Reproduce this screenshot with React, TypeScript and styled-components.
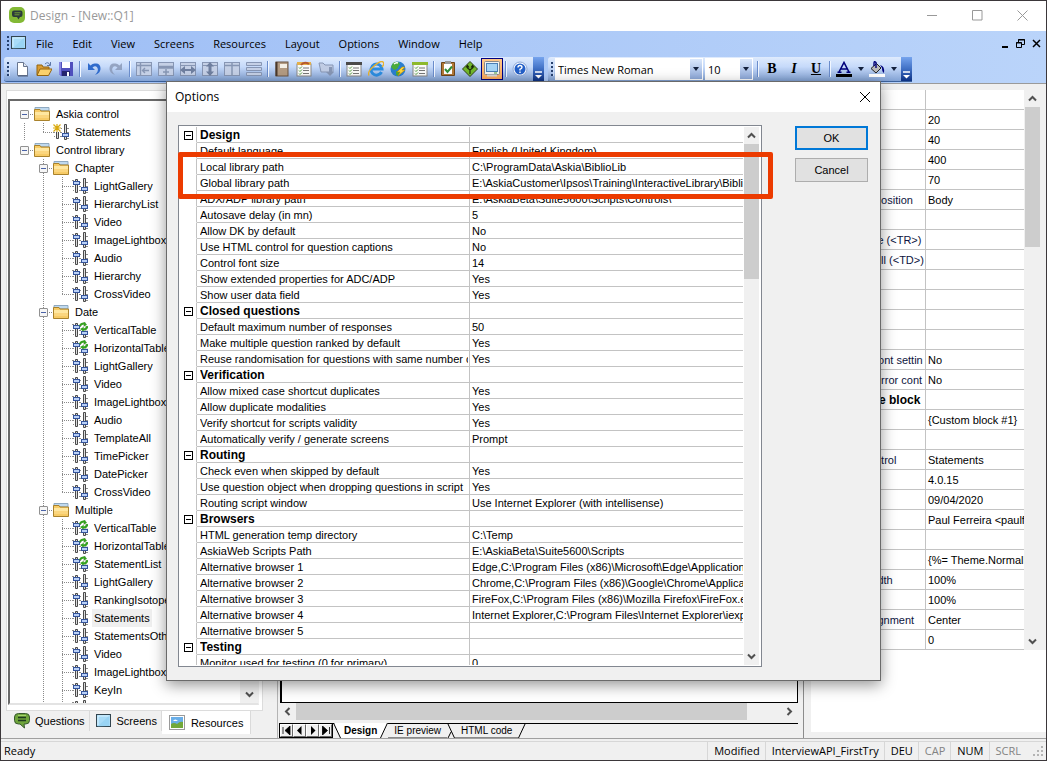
import React from 'react';
import styled, { createGlobalStyle, css } from 'styled-components';

const UI = "'Open Sans', 'Noto Sans', sans-serif";
const SANS = "'Liberation Sans', Arial, sans-serif";
const FACE = '#f0f0f0';
const LINE = '#c3c3c3';

const GlobalStyle = createGlobalStyle`
  *, *::before, *::after { box-sizing: border-box; }
  body { margin: 0; background: ${FACE}; color: #000; }
  button, select { font: inherit; color: inherit; margin: 0; }
  button { padding: 0; border: 0; background: none; }
  svg { display: block; flex: none; }
`;

/* ---------- application frame ---------- */

const AppWindow = styled.div`
  position: relative;
  display: flex;
  flex-direction: column;
  height: 100vh;
  min-height: 480px;
  overflow: hidden;
  border: 1px solid #3b373a;
  background: ${FACE};
  font: 11px ${SANS};
`;

const TitleBar = styled.header`
  display: flex;
  flex: none;
  align-items: center;
  height: 30px;
  padding: 0 18px 2px 8px;
  background: #fff;
  color: #999;
  font: 12px ${UI};
`;

const WindowTitle = styled.h1`
  flex: 1;
  margin: 0 0 0 5px;
  font: inherit;
`;

const CaptionButtons = styled.div`
  display: flex;
  gap: 34px;
`;

const MenuBar = styled.nav`
  display: flex;
  flex: none;
  align-items: center;
  height: 26px;
  padding: 0 4px 2px 6px;
  background: linear-gradient(90deg, #9ebef5, #bad4fa);
  font: 11px ${UI};
`;

const MenuList = styled.div`
  display: flex;
  flex: 1;
  gap: 19px;
  margin-left: 9px;
`;

const MdiButtons = styled.div`
  display: flex;
  gap: 5px;
`;

const ToolbarRow = styled.div`
  display: flex;
  flex: none;
  gap: 4px;
  height: 27px;
  padding: 0 0 1px 3px;
  border-bottom: 1px solid #9a9a9a;
  background: linear-gradient(90deg, #9ebef5, #bad4fa);
`;

const Toolbar = styled.div`
  display: flex;
  align-items: center;
  padding-left: 2px;
  border-radius: 3px 0 0 3px;
  border-bottom: 1px solid #3b619c;
  background: linear-gradient(#dfebfd, #c6dafa 40%, #82a2d4);
`;

const Grip = styled.span`
  width: 3px;
  height: 14px;
  margin: 0 1px;
  background: repeating-linear-gradient(#27416f 0 2px, transparent 2px 4px);
  border-right: 1px solid #cfe0fb;
`;

const ToolButton = styled.button<{ $on?: boolean; $narrow?: boolean }>`
  display: flex;
  align-items: center;
  justify-content: center;
  width: ${p => (p.$narrow ? 11 : 22)}px;
  height: 22px;
  ${p => p.$on && css`
    border: 1px solid #000080;
    background: linear-gradient(#ffc98a, #fba95e);
  `}
`;

const ToolSeparator = styled.span`
  width: 2px;
  height: 16px;
  margin: 0 2px;
  background: linear-gradient(90deg, #6a8ccb 50%, #f1f7ff 50%);
`;

const OverflowCap = styled.button`
  display: flex;
  align-items: flex-end;
  justify-content: center;
  align-self: stretch;
  width: 11px;
  margin-left: 2px;
  padding-bottom: 2px;
  background: linear-gradient(#76a4ee, #3f6fc4 50%, #0c3183);
`;

const Combo = styled.label<{ $width: number }>`
  display: flex;
  width: ${p => p.$width}px;
  height: 22px;
  margin-right: 2px;
  padding: 1px;
  background: #fff;
  font: 11px ${UI};
  select {
    flex: 1;
    min-width: 0;
    padding: 0 0 0 2px;
    border: 0;
    appearance: none;
    background: #fff;
  }
  span {
    display: flex;
    align-items: center;
    justify-content: center;
    width: 12px;
    background: linear-gradient(#dbe8fc, #8faadb);
    pointer-events: none;
  }
`;

const Letter = styled.span<{ $kind: 'b' | 'i' | 'u' }>`
  font: bold 14px/16px 'Liberation Serif', serif;
  ${p => p.$kind === 'i' && 'font-style: italic;'}
  ${p => p.$kind === 'u' && 'text-decoration: underline;'}
`;

const Workspace = styled.div`
  display: grid;
  flex: 1;
  grid-template-columns: 277px minmax(0, 1fr) 243px;
  grid-template-rows: minmax(0, 1fr);
  min-height: 0;
  margin-bottom: 2px;
  border-bottom: 1px solid #a0a0a0;
`;

/* ---------- resource tree ---------- */

const ResourcePane = styled.aside`
  display: flex;
  flex-direction: column;
  padding: 6px 14px 2px 5px;
  border-right: 1px solid #b4b4b4;
`;

const TreeFrame = styled.div`
  display: flex;
  flex: 1;
  min-height: 0;
  padding: 8px 3px 5px 1px;
  border: 1px solid #dcdcdc;
  background: #fff;
`;

const TreeBox = styled.div`
  display: flex;
  flex: 1;
  min-width: 0;
  border: 2px solid #696969;
  border-right: 1px solid #f0f0f0;
  border-bottom: 2px solid #e3e3e3;
`;

const Tree = styled.ul`
  flex: 1;
  min-width: 0;
  margin: 0;
  padding: 4px 0 0 5px;
  overflow: hidden;
  list-style: none;
`;

const TreeRow = styled.li`
  display: flex;
  align-items: center;
  height: 18px;
  white-space: nowrap;
`;

type GuideKind = 'none' | 'root' | 'pass' | 'tee' | 'end';

const dotsDown = 'repeating-linear-gradient(#8a8a8a 0 1px, transparent 1px 2px)';
const dotsAcross = 'repeating-linear-gradient(90deg, #8a8a8a 0 1px, transparent 1px 2px)';
const guideBackground: Record<GuideKind, string> = {
  none: 'none',
  root: `${dotsAcross} 9px 9px / 10px 1px no-repeat`,
  pass: `${dotsDown} 9px 0 / 1px 18px no-repeat`,
  tee: `${dotsDown} 9px 0 / 1px 18px no-repeat, ${dotsAcross} 9px 9px / 10px 1px no-repeat`,
  end: `${dotsDown} 9px 0 / 1px 10px no-repeat, ${dotsAcross} 9px 9px / 10px 1px no-repeat`,
};

const Guide = styled.span<{ $kind: GuideKind }>`
  display: flex;
  flex: none;
  align-items: center;
  justify-content: center;
  width: 19px;
  height: 18px;
  background: ${p => guideBackground[p.$kind]};
`;

const TreeToggle = styled.button`
  width: 9px;
  height: 9px;
  border: 1px solid #919191;
  border-radius: 1px;
  background: linear-gradient(#4b63a7, #4b63a7) center / 5px 1px no-repeat #f6f6f6;
`;

const TreeLabel = styled.span<{ $selected?: boolean }>`
  margin-left: 4px;
  padding: 0 2px;
  line-height: 18px;
  background: ${p => (p.$selected ? '#efefef' : 'transparent')};
`;

const PaneTabs = styled.div`
  display: flex;
  flex: none;
  height: 25px;
  padding-left: 2px;
`;

const PaneTab = styled.button<{ $active?: boolean }>`
  display: flex;
  align-items: center;
  gap: ${p => (p.$active ? 6 : 5)}px;
  height: ${p => (p.$active ? 23 : 20)}px;
  padding: 0 ${p => (p.$active ? 7 : 4)}px 0 ${p => (p.$active ? 7 : 6)}px;
  border-right: 1px solid #dadada;
  background: ${p => (p.$active ? '#fff' : 'transparent')};
`;

/* ---------- scroll bars ---------- */

const ScrollTrack = styled.div<{ $width: number; $horizontal?: boolean }>`
  display: flex;
  flex: none;
  flex-direction: ${p => (p.$horizontal ? 'row' : 'column')};
  ${p => (p.$horizontal ? `height: ${p.$width}px;` : `width: ${p.$width}px;`)}
  background: ${FACE};
`;

const ScrollArrow = styled.button`
  display: flex;
  flex: 0 0 17px;
  align-items: center;
  justify-content: center;
`;

const ScrollThumb = styled.div<{ $share: number }>`
  flex: ${p => p.$share} 1 0;
  background: #cdcdcd;
`;

const ScrollSpace = styled.div<{ $share: number }>`
  flex: ${p => p.$share} 1 0;
`;

/* ---------- page designer ---------- */

const DesignPane = styled.main`
  display: flex;
  flex-direction: column;
  min-width: 0;
  padding: 6px 5px 0 1px;
`;

const Canvas = styled.div`
  flex: 1;
  margin-left: 1px;
  border: solid #000;
  border-width: 1px 1px 1px 2px;
  background: #fff;
`;

const SheetBar = styled.div`
  display: flex;
  flex: none;
  height: 15px;
  margin-top: 3px;
  background: linear-gradient(#000, #000) top / 100% 1px no-repeat;
  font-size: 10px;
`;

const SheetNav = styled.div`
  display: flex;
  border: 1px solid #000;
`;

const SheetNavButton = styled.button`
  display: flex;
  align-items: center;
  justify-content: center;
  width: 13px;
  border: 1px solid #fff;
  border-right-color: #696969;
  border-bottom-color: #696969;
`;

const SheetTab = styled.button<{ $active?: boolean }>`
  padding: 0 ${p => (p.$active ? 3 : 6)}px;
  border-bottom: 1px solid ${p => (p.$active ? '#fff' : '#8a8a8a')};
  background: ${p => (p.$active ? '#fff' : 'transparent')};
  font-weight: ${p => (p.$active ? 'bold' : 'normal')};
  white-space: nowrap;
`;

/* ---------- property grids ---------- */

const PropertyPane = styled.aside`
  display: flex;
  flex-direction: column;
  min-width: 0;
  padding: 6px 0 6px 7px;
  border-left: 1px solid #8c8c8c;
`;

const PropertyArea = styled.div`
  display: flex;
  padding-right: 6px;
`;

const PropertyFill = styled.div`
  flex: 1;
  background: #fff;
`;

const GridScroller = styled.div`
  flex: 1;
  min-width: 0;
  min-height: 0;
  margin-right: 1px;
  overflow: hidden;
  background: #fff;
`;

const Grid = styled.table`
  width: 100%;
  border-collapse: separate;
  border-spacing: 0;
  table-layout: fixed;
  th, td {
    overflow: hidden;
    white-space: nowrap;
    text-align: left;
    font-weight: normal;
    border-bottom: 1px solid ${LINE};
  }
  th { border-right: 1px solid ${LINE}; }
`;

const SideGrid = styled(Grid)`
  th, td { height: 20px; padding: 2px 0 0 2px; line-height: 17px; }
  th { padding: 2px 1px 0 64px; color: #0d1440; }
`;

const OptionGrid = styled(Grid)`
  th, td { height: 16px; padding: 2px 0 0 2px; line-height: 13px; }
  th { padding: 2px 1px 0 3px; }
  td.gutter {
    padding: 1px 0 0 4px;
    border-right: 1px solid ${LINE};
    border-bottom-color: #fff;
  }
`;

const CellText = styled.span`
  display: block;
  overflow: hidden;
`;

const GroupName = styled.strong`
  display: block;
  overflow: hidden;
  color: #000;
  font-size: 12px;
`;

const GroupToggle = styled.button`
  display: block;
  width: 9px;
  height: 9px;
  border: 1px solid #000;
  background: linear-gradient(#000, #000) center / 5px 1px no-repeat #fff;
`;

/* ---------- options dialog ---------- */

const Dialog = styled.section`
  position: absolute;
  inset: 80px 165px 79px 165px;
  display: flex;
  flex-direction: column;
  border: 1px solid #6a6a6a;
  background: ${FACE};
  box-shadow: 0 4px 14px rgba(0, 0, 0, 0.42);
`;

const DialogTitle = styled.header`
  display: flex;
  flex: none;
  align-items: center;
  justify-content: space-between;
  height: 30px;
  padding: 0 10px 1px 8px;
  background: #fff;
  h2 { margin: 0; font: 12px ${UI}; }
`;

const DialogBody = styled.div`
  display: flex;
  flex: 1;
  gap: 33px;
  min-height: 0;
  padding: 13px 12px 13px 11px;
`;

const OptionList = styled.div`
  position: relative;
  display: flex;
  flex: 1;
  min-width: 0;
  padding: 1px 2px 1px 1px;
  border: 1px solid #828790;
  background: #fff;
`;

const Highlight = styled.div`
  position: absolute;
  top: 26px;
  left: -1px;
  right: -12px;
  height: 47px;
  border: 5px solid #ec3b00;
  border-radius: 2px;
`;

const DialogActions = styled.div`
  display: flex;
  flex-direction: column;
  gap: 8px;
  width: 73px;
  padding-top: 1px;
`;

const PushButton = styled.button<{ $primary?: boolean }>`
  height: 24px;
  border: ${p => (p.$primary ? '2px solid #0078d7' : '1px solid #adadad')};
  background: #e1e1e1;
`;

/* ---------- status bar ---------- */

const StatusBar = styled.footer`
  display: flex;
  flex: none;
  align-items: stretch;
  height: 19px;
  border-top: 1px solid #d7d7d7;
  font: 11px/18px ${UI};
`;

const StatusText = styled.span`
  flex: 1;
  padding-left: 3px;
`;

const StatusItem = styled.span<{ $off?: boolean }>`
  padding: 0 5px 0 6px;
  border-left: 1px solid #d7d7d7;
  color: ${p => (p.$off ? '#838383' : '#000')};
`;

const SizeGrip = styled.span`
  align-self: flex-end;
  width: 12px;
  height: 12px;
  margin: 0 1px 2px 7px;
`;

/* ---------- drawings ---------- */

const Svg = ({ w = 16, h = 16, children }: { w?: number; h?: number; children: React.ReactNode }) => (
  <svg width={w} height={h} viewBox={`0 0 ${w} ${h}`} fill="none" aria-hidden="true">{children}</svg>
);

const Chevron = ({ dir }: { dir: 'up' | 'down' | 'left' | 'right' }) => {
  const d = { up: 'M1 6.5 4.5 3 8 6.5', down: 'M1 2.5 4.5 6 8 2.5', left: 'M6.5 1 3 4.5 6.5 8', right: 'M2.5 1 6 4.5 2.5 8' }[dir];
  return <Svg w={9} h={9}><path d={d} stroke="#505050" strokeWidth="2" /></Svg>;
};

const AppLogo = () => (
  <Svg w={16} h={16}>
    <rect width="16" height="16" rx="5" fill="#83b935" />
    <path d="M5 3.5h6.500q2 0 2 2v2.500q0 2-2 2h-.5l-1.500 2.500-1.500-2.500H5q-2 0-2-2V5.500q0-2 2-2z" fill="#2b3a3c" />
    <path d="M5.500 5.800h6M5.500 7.800h5" stroke="#83b935" strokeWidth=".8" />
  </Svg>
);

const ScreenIcon = () => (
  <Svg w={16} h={14}>
    <rect x=".5" y=".5" width="14" height="12" fill="#a9dcf8" stroke="#33454f" />
    <path d="M2 11V2h11" stroke="#d8f2ff" />
    <path d="M1.500 12.500 13 2v10z" fill="#8accf0" opacity=".5" />
  </Svg>
);

const BubbleIcon = () => (
  <Svg>
    <path d="M4.500 .5h7q4 0 4 3.500v3.500q0 3.500-4 3.500H10l.5 4L6 11H4.500Q.5 11 .5 7.500V4Q.5.500 4.500.500z" fill="#6fa53c" stroke="#37592f" />
    <path d="M4 4.500h8M4 7.500h8" stroke="#1f3b20" strokeWidth="1.400" />
    <path d="M4 2.500h8" stroke="#a4d36c" />
  </Svg>
);

const PictureIcon = () => (
  <Svg>
    <rect x=".5" y=".5" width="15" height="14" fill="#fff" stroke="#9a9a9a" />
    <path d="M2 2h12v11H2z" fill="#69aee8" />
    <path d="M2 9q3-2 6 0 3-3 6-2v6H2z" fill="#72a83a" />
    <path d="M4 6q2-3 5 0z" fill="#fff" />
  </Svg>
);

const FolderIcon = () => (
  <Svg>
    <path d="M1 1.500h14V5H1z" fill="#bfd9ef" stroke="#8fa9c0" />
    <path d="M.5 3.500H6l1 1.500h8.500v9.500H.5z" fill="#f7cb66" stroke="#a9822c" />
    <path d="M1 6h14v3H1z" fill="#ffe7a0" />
    <path d="M1 9h14v3H1z" fill="#fbd67e" />
  </Svg>
);

const SliderIcon = ({ mark }: { mark?: 'star' | 'sync' }) => (
  <Svg>
    <path d="M0 2.500h2M7 4.500h2M0 8.500h2M7 8.500h2M1 12.500h1M7 12.500h2M14 4.500h2M14 8.500h2M14 14.500h2" stroke="#8c8c8c" />
    <path d="M3.500 1.500h2v13h-2zM11.500.5h2v15h-2z" fill="#dcdcdc" stroke="#4a4a4a" />
    <rect x="1.500" y="3.500" width="6" height="3" fill="#b9d0f7" stroke="#34549b" />
    <rect x="9.500" y="9.500" width="6" height="3" fill="#b9d0f7" stroke="#34549b" />
    {mark === 'star' && (
      <>
        <path d="M0 0h8v8H0z" fill="#fff" />
        <path d="M4 0v8M0 4h8M0.500.500l7 7M7.500.500l-7 7" stroke="#d9a90e" strokeWidth="1.200" />
      </>
    )}
    {mark === 'sync' && (
      <>
        <path d="M9 0h7v9H9z" fill="#fff" opacity=".7" />
        <path d="M8 4q1-3 5-2.500M15.500 4q-1 4-5 3.500" stroke="#35a21f" strokeWidth="2" />
        <path d="M12 0v4.500l3-2zM11.500 5v4.500L8 7z" fill="#35a21f" />
      </>
    )}
  </Svg>
);

const Drop = () => <Svg w={6} h={4}><path d="M0 0h6L3 4z" fill="#14213d" /></Svg>;

const CapMark = () => (
  <Svg w={7} h={8}>
    <path d="M0 1h7" stroke="#fff" strokeWidth="1.500" />
    <path d="M0 4h7L3.500 7.500z" fill="#fff" />
  </Svg>
);

const grey = '#8796b4';
const paleFrame = (inner: React.ReactNode) => (
  <Svg>
    <rect x=".5" y="1.500" width="15" height="13" fill="#c5d0e6" stroke={grey} />
    {inner}
  </Svg>
);

const sheetLines = (
  <>
    <rect x="1" y="3" width="14" height="12" fill="#fafafa" stroke="#888" />
    <path d="M7 7h6M7 9.500h6M7 12.500h6" stroke="#777" />
    <path d="m3 6.500 1 1 2-2M3 9.500l1 1 2-2M3 12.500l1 1 2-2" stroke="#4f9d3a" />
  </>
);

const icons: Record<string, React.ReactNode> = {
  new: <Svg><path d="M3.500 1.500h6l4 4v9h-10z" fill="#fff" stroke="#687690" /><path d="M9.500 1.500v4h4" fill="#dfe6f2" stroke="#687690" /><path d="M4 15h10" stroke="#4c5a77" /></Svg>,
  open: <Svg><path d="M1 14V4h5l1 2h6v3" fill="#d99c34" stroke="#94650f" /><path d="M1 14.500 4 8h12l-3.500 6.500z" fill="#fbd16b" stroke="#94650f" /><path d="M9 3q3-3 5 1M14.500 1v3.500H11" stroke="#5c77a8" /></Svg>,
  save: <Svg><path d="M1 1h14v14H3l-2-2z" fill="#4f4fbd" /><path d="M4 1h8v6H4z" fill="#fff" /><path d="M1 13V1h2v13z" fill="#8585e0" /><path d="M4 10h8v5H4z" fill="#24246d" /><path d="M9 11h2v4H9z" fill="#fff" /></Svg>,
  undo: <Svg><path d="M2 2v7h7L6.500 6.500Q10 4 11.500 7t-2.500 7q6-2 5.500-7T9.500 2.500Q7 2 4.500 4.500z" fill="#2f6bcc" /></Svg>,
  redo: <Svg><path d="M14 2v7H7l2.500-2.500Q6 4 4.500 7T7 14Q1 12 1.500 7T6.500 2.500Q9 2 11.500 4.500z" fill={grey} opacity=".8" /></Svg>,
  colLeft: paleFrame(<path d="M4.500 2v12M1 4.500h14M7 9.500h6M9 7l-2.500 2.500L9 12" stroke={grey} strokeWidth="1.400" />),
  rowUp: paleFrame(<path d="M1 5.500h14M1 7h14M8 8v6M5 11h6" stroke={grey} strokeWidth="1.500" />),
  width: paleFrame(<><path d="M1 4.500h14" stroke={grey} /><path d="m0 9 5-4v3h6V5l5 4-5 4v-3H5v3z" fill="#6f7f9f" /></>),
  height: paleFrame(<><path d="M1 4.500h14" stroke={grey} /><path d="m8 1 4 4.500H9.500v5H12L8 15l-4-4.500h2.500v-5H4z" fill="#6f7f9f" /></>),
  cols: paleFrame(<path d="M8 2v12M1 4.500h14" stroke={grey} strokeWidth="1.500" />),
  rows: (
    <Svg>
      <path d="M.5 1.500h15v3H.5zM.5 6.500h15v3H.5zM.5 11.500h15v3H.5z" fill="#c5d0e6" stroke={grey} />
    </Svg>
  ),
  book: <Svg><rect x="2" y="1" width="12" height="14" fill="#b39b83" stroke="#6b5542" /><path d="M2.500 1v14" stroke="#4a382a" strokeWidth="2" /><rect x="6" y="3" width="7" height="4" fill="#f4efe6" /></Svg>,
  formEdit: <Svg>{sheetLines}<path d="M1 1h14v3H1z" fill="#e3b04b" /><path d="M5 4q3-4 8-1" stroke="#b5572e" strokeWidth="2" /></Svg>,
  importOff: <Svg><path d="M1 2h4l2 2h8v7H3z" fill="#c0cce4" stroke={grey} /><path d="M11 6v5H8l4 4 4-4h-2V6z" fill={grey} /></Svg>,
  form: <Svg>{sheetLines}<path d="M0 1h16v3H0z" fill="#4a4a4a" /></Svg>,
  ie: <Svg><path d="M13.500 11A5.500 5.500 0 1 1 14 8H4.500" stroke="#2d8de0" strokeWidth="3" /><path d="M1 14.500Q-1 11 6 5t9-4q2 2-1 5" stroke="#e8b22e" strokeWidth="1.400" /></Svg>,
  globe: <Svg><circle cx="8" cy="8" r="7.500" fill="#2a7fd0" /><path d="M3 2q5-3 7 1L7 8l-3 1-3-3zM6 10l4 1-1 4-3-1z" fill="#49ab3a" /><path d="M4 3q2-2 4-1" stroke="#fff" strokeWidth="1.500" /><path d="m12 6-5 5h3l-2 4 7-6h-3l3-3z" fill="#ffd83a" stroke="#b88608" strokeWidth=".6" /></Svg>,
  formGreen: <Svg>{sheetLines}<path d="M0 1h16v3H0z" fill="#8db92e" /></Svg>,
  check: <Svg><path d="M1.500 1.500h13v13h-13z" fill="#b27838" stroke="#6d4519" /><path d="M4 3h8v10H4z" fill="#fff" /><path d="M5 0h6v3H5z" fill="#999" /><path d="m5 8 2.500 3L12 5.500" stroke="#2f8f3a" strokeWidth="2" /></Svg>,
  route: <Svg><path d="m8 .5 7.500 7.500L8 15.500.5 8z" fill="#72b82a" stroke="#33421b" /><path d="M8 13V9L5.500 7V5M8 9l2.500-2V5M4 6.500l1.500-2 1.500 2M9 6.500l1.500-2 1.500 2" stroke="#1a2b08" strokeWidth="1.200" /></Svg>,
  monitor: <Svg><rect x=".5" y=".5" width="15" height="13" rx="1" fill="#f2f2f2" stroke="#8a8a8a" /><rect x="2.500" y="2.500" width="11" height="8" fill="#a6d4f6" stroke="#4c7fb5" /><path d="M10 12h3" stroke="#4aa53a" /><path d="M3 14.500h10" stroke="#d8d8d8" strokeWidth="2" /></Svg>,
  help: <Svg><circle cx="8" cy="8" r="7" fill="#f4f8ff" stroke="#8fa9d6" /><circle cx="8" cy="8" r="5.500" fill="#2460c8" /><path d="M6 6.500Q6 4.500 8 4.500t2 1.800Q10 7.500 8 8.300V9.500M8 10.500v1.500" stroke="#fff" strokeWidth="1.400" /></Svg>,
};

const toolGroups: [string, string][][] = [
  [['new', 'New'], ['open', 'Open'], ['save', 'Save']],
  [['undo', 'Undo'], ['redo', 'Redo']],
  [['colLeft', 'Insert column'], ['rowUp', 'Insert row'], ['width', 'Same width'], ['height', 'Same height'], ['cols', 'Columns'], ['rows', 'Rows']],
  [['book', 'Library'], ['formEdit', 'Edit form'], ['importOff', 'Import']],
  [['form', 'Form'], ['ie', 'Internet Explorer'], ['globe', 'Publish'], ['formGreen', 'Preview']],
  [['check', 'Verify'], ['route', 'Routing'], ['monitor', 'Screen']],
  [['help', 'Help']],
];

/* ---------- data ---------- */

const menus = ['File', 'Edit', 'View', 'Screens', 'Resources', 'Layout', 'Options', 'Window', 'Help'];

type Node = { label: string; level: 0 | 1 | 2; mark?: 'star' | 'sync'; last?: boolean; leaf?: boolean; selected?: boolean };

const leaves = (labels: string, open?: boolean): Node[] =>
  labels.split(' ').map((raw, i, all) => ({
    label: raw.replace('*', ''),
    level: 2,
    leaf: true,
    mark: raw.endsWith('*') ? 'sync' : undefined,
    last: !open && i === all.length - 1,
    selected: raw === 'Statements',
  }));

const treeNodes: Node[] = [
  { label: 'Askia control', level: 0 },
  { label: 'Statements', level: 1, leaf: true, mark: 'star', last: true },
  { label: 'Control library', level: 0, last: true },
  { label: 'Chapter', level: 1 },
  ...leaves('LightGallery HierarchyList Video ImageLightbox Audio Hierarchy CrossVideo'),
  { label: 'Date', level: 1 },
  ...leaves('VerticalTable* HorizontalTable* LightGallery Video ImageLightbox Audio TemplateAll TimePicker DatePicker CrossVideo'),
  { label: 'Multiple', level: 1 },
  ...leaves('VerticalTable* HorizontalTable* StatementList* LightGallery RankingIsotope Statements StatementsOther Video ImageLightbox KeyIn', true),
  { label: '', level: 2, leaf: true },
];

const guidesFor = (n: Node): GuideKind[] => {
  if (n.level === 0) return ['root'];
  if (n.level === 1) return n.last ? ['pass', 'end'] : ['none', 'tee'];
  return ['none', 'pass', n.last ? 'end' : 'tee'];
};

type Option = [string, string?];
const options: { group: string; rows: Option[] }[] = [
  { group: 'Design', rows: [
    ['Default language', 'English (United Kingdom)'],
    ['Local library path', 'C:\\ProgramData\\Askia\\BiblioLib'],
    ['Global library path', 'E:\\AskiaCustomer\\Ipsos\\Training\\InteractiveLibrary\\BiblioLib'],
    ['ADX/ADP library path', 'E:\\AskiaBeta\\Suite5600\\Scripts\\Controls\\'],
    ['Autosave delay (in mn)', '5'],
    ['Allow DK by default', 'No'],
    ['Use HTML control for question captions', 'No'],
    ['Control font size', '14'],
    ['Show extended properties for ADC/ADP', 'Yes'],
    ['Show user data field', 'Yes'],
  ] },
  { group: 'Closed questions', rows: [
    ['Default maximum number of responses', '50'],
    ['Make multiple question ranked by default', 'Yes'],
    ['Reuse randomisation for questions with same number of', 'Yes'],
  ] },
  { group: 'Verification', rows: [
    ['Allow mixed case shortcut duplicates', 'Yes'],
    ['Allow duplicate modalities', 'Yes'],
    ['Verify shortcut for scripts validity', 'Yes'],
    ['Automatically verify / generate screens', 'Prompt'],
  ] },
  { group: 'Routing', rows: [
    ['Check even when skipped by default', 'Yes'],
    ['Use question object when dropping questions in script', 'Yes'],
    ['Routing script window', 'Use Internet Explorer (with intellisense)'],
  ] },
  { group: 'Browsers', rows: [
    ['HTML generation temp directory', 'C:\\Temp'],
    ['AskiaWeb Scripts Path', 'E:\\AskiaBeta\\Suite5600\\Scripts'],
    ['Alternative browser 1', 'Edge,C:\\Program Files (x86)\\Microsoft\\Edge\\Application\\'],
    ['Alternative browser 2', 'Chrome,C:\\Program Files (x86)\\Google\\Chrome\\Application'],
    ['Alternative browser 3', 'FireFox,C:\\Program Files (x86)\\Mozilla Firefox\\FireFox.exe'],
    ['Alternative browser 4', 'Internet Explorer,C:\\Program Files\\Internet Explorer\\iexplore'],
    ['Alternative browser 5'],
  ] },
  { group: 'Testing', rows: [['Monitor used for testing (0 for primary)', '0']] },
];

const properties: { name?: string; value?: string; bold?: boolean }[] = [
  {}, { value: '20' }, { value: '40' }, { value: '400' }, { value: '70' },
  { name: 'position', value: 'Body' }, {},
  { name: 'le (<TR>)' }, { name: 'ell (<TD>)' }, {}, {}, {}, {},
  { name: 'font settin', value: 'No' }, { name: 'error cont', value: 'No' },
  { name: 'te block', bold: true }, { value: '{Custom block #1}' }, {},
  { name: 'ntrol', value: 'Statements' }, { name: 'n', value: '4.0.15' },
  { value: '09/04/2020' }, { value: 'Paul Ferreira <paulf@' }, {},
  { value: '{%= Theme.NormalF' }, { name: 'idth', value: '100%' },
  { name: 'h', value: '100%' }, { name: 'ignment', value: 'Center' }, { value: '0' },
];

/* ---------- parts ---------- */

const VerticalScroll = ({ width, before = 0, thumb, after }: { width: number; before?: number; thumb: number; after: number }) => (
  <ScrollTrack $width={width}>
    <ScrollArrow type="button" aria-label="Scroll up"><Chevron dir="up" /></ScrollArrow>
    <ScrollSpace $share={before} />
    <ScrollThumb $share={thumb} />
    <ScrollSpace $share={after} />
    <ScrollArrow type="button" aria-label="Scroll down"><Chevron dir="down" /></ScrollArrow>
  </ScrollTrack>
);

const Resources = () => (
  <ResourcePane>
    <TreeFrame>
      <TreeBox>
        <Tree>
          {treeNodes.map((n, i) => {
            const guides = guidesFor(n);
            return (
              <TreeRow key={i}>
                {guides.map((g, k) => (
                  <Guide key={k} $kind={g}>
                    {!n.leaf && k === guides.length - 1 && <TreeToggle type="button" aria-label={`Collapse ${n.label}`} />}
                  </Guide>
                ))}
                {n.leaf ? <SliderIcon mark={n.mark} /> : <FolderIcon />}
                {n.label && <TreeLabel $selected={n.selected}>{n.label}</TreeLabel>}
              </TreeRow>
            );
          })}
        </Tree>
        <VerticalScroll width={18} thumb={1} after={1} />
      </TreeBox>
    </TreeFrame>
    <PaneTabs>
      <PaneTab type="button"><BubbleIcon />Questions</PaneTab>
      <PaneTab type="button"><ScreenIcon />Screens</PaneTab>
      <PaneTab type="button" $active><PictureIcon />Resources</PaneTab>
    </PaneTabs>
  </ResourcePane>
);

const navMarks = ['M1 1v7M8 0v9L3 4.500z', 'M6.500 0v9L2 4.500z', 'M3 0v9l4.500-4.500z', 'M8.500 1v7M1.500 0v9l5-4.500z'];

const Designer = () => (
  <DesignPane>
    <Canvas />
    <ScrollTrack $width={17} $horizontal>
      <ScrollArrow type="button" aria-label="Scroll left"><Chevron dir="left" /></ScrollArrow>
      <ScrollThumb $share={448} />
      <ScrollSpace $share={34} />
      <ScrollArrow type="button" aria-label="Scroll right"><Chevron dir="right" /></ScrollArrow>
    </ScrollTrack>
    <SheetBar>
      <SheetNav>
        {navMarks.map((d, i) => (
          <SheetNavButton key={d} type="button" aria-label={['First', 'Previous', 'Next', 'Last'][i]}>
            <Svg w={9} h={9}><path d={d} fill="#000" stroke={i === 0 || i === 3 ? '#000' : 'none'} strokeWidth=".8" /></Svg>
          </SheetNavButton>
        ))}
      </SheetNav>
      <Svg w={8} h={15}><path d="M1 0h7v15z" fill="#fff" /><path d="m.5 0 7 15" stroke="#000" /></Svg>
      <SheetTab type="button" $active>Design</SheetTab>
      <Svg w={8} h={15}><path d="M0 0h8L1 15H0z" fill="#fff" /><path d="M.5 15 7.500 0" stroke="#000" /></Svg>
      <SheetTab type="button">IE preview</SheetTab>
      <Svg w={8} h={15}><path d="m.5 0 7 15M1 15l3-6" stroke="#000" /></Svg>
      <SheetTab type="button">HTML code</SheetTab>
      <Svg w={8} h={15}><path d="M.5 15 7.500 0" stroke="#000" /></Svg>
    </SheetBar>
  </DesignPane>
);

const Properties = () => (
  <PropertyPane>
    <PropertyArea>
      <GridScroller>
        <SideGrid>
          <colgroup><col width="115" /><col /></colgroup>
          <tbody>
            {properties.map((p, i) => (
              <tr key={i}>
                <th scope="row">{p.bold ? <GroupName>{p.name}</GroupName> : <CellText>{p.name}</CellText>}</th>
                <td>{p.value}</td>
              </tr>
            ))}
          </tbody>
        </SideGrid>
      </GridScroller>
      <VerticalScroll width={15} thumb={140} after={386} />
    </PropertyArea>
    <PropertyFill />
  </PropertyPane>
);

const OptionsDialog = () => (
  <Dialog role="dialog" aria-label="Options">
    <DialogTitle>
      <h2>Options</h2>
      <button type="button" aria-label="Close">
        <Svg w={10} h={10}><path d="m0 0 10 10M10 0 0 10" stroke="#000" /></Svg>
      </button>
    </DialogTitle>
    <DialogBody>
      <OptionList>
        <GridScroller>
          <OptionGrid>
            <colgroup><col width="17" /><col width="273" /><col /></colgroup>
            <tbody>
              {options.map(({ group, rows }) => (
                <React.Fragment key={group}>
                  <tr>
                    <td className="gutter"><GroupToggle type="button" aria-label={`Collapse ${group}`} /></td>
                    <th scope="rowgroup"><GroupName>{group}</GroupName></th>
                    <td />
                  </tr>
                  {rows.map(([name, value]) => (
                    <tr key={name}>
                      <td className="gutter" />
                      <th scope="row"><CellText>{name}</CellText></th>
                      <td>{value}</td>
                    </tr>
                  ))}
                </React.Fragment>
              ))}
            </tbody>
          </OptionGrid>
        </GridScroller>
        <VerticalScroll width={15} thumb={135} after={370} />
        <Highlight />
      </OptionList>
      <DialogActions>
        <PushButton type="button" $primary>OK</PushButton>
        <PushButton type="button">Cancel</PushButton>
      </DialogActions>
    </DialogBody>
  </Dialog>
);

const FormatToolbar = () => (
  <Toolbar>
    <Grip />
    <Combo $width={148}>
      <select aria-label="Font" defaultValue="Times New Roman"><option>Times New Roman</option></select>
      <span><Drop /></span>
    </Combo>
    <Combo $width={48}>
      <select aria-label="Font size" defaultValue="10"><option>10</option></select>
      <span><Drop /></span>
    </Combo>
    <ToolSeparator />
    <ToolButton type="button"><Letter $kind="b">B</Letter></ToolButton>
    <ToolButton type="button"><Letter $kind="i">I</Letter></ToolButton>
    <ToolButton type="button"><Letter $kind="u">U</Letter></ToolButton>
    <ToolSeparator />
    <ToolButton type="button" aria-label="Text colour">
      <Svg><path d="M3 11 8 1.500 13 11M5 8h6M1.500 11.200h4M10.500 11.200h4" stroke="#00007b" strokeWidth="1.600" /><path d="M0 13h16v3H0z" fill="#000" /></Svg>
    </ToolButton>
    <ToolButton type="button" $narrow aria-label="Text colours"><Drop /></ToolButton>
    <ToolButton type="button" aria-label="Fill colour">
      <Svg><path d="m2 7.500 5.500-5L12 7l-5 5z" fill="#b9b9b9" stroke="#222" /><path d="M7 7V1.500q-2-2-2 1V5" stroke="#00007b" strokeWidth="1.400" /><path d="M11 4q5 1 4 8-2-1-2-5z" fill="#00007b" /><path d="M0 13h16v3H0z" fill="#fff" /></Svg>
    </ToolButton>
    <ToolButton type="button" $narrow aria-label="Fill colours"><Drop /></ToolButton>
    <OverflowCap type="button" aria-label="More formatting"><CapMark /></OverflowCap>
  </Toolbar>
);

export default function App() {
  return (
    <>
      <GlobalStyle />
      <AppWindow>
        <TitleBar>
          <AppLogo />
          <WindowTitle>Design - [New::Q1]</WindowTitle>
          <CaptionButtons>
            <button type="button" aria-label="Minimize"><Svg w={11} h={11}><path d="M0 5.500h10" stroke="#999" /></Svg></button>
            <button type="button" aria-label="Maximize"><Svg w={11} h={11}><path d="M.5.500h9.500v9.500H.5z" stroke="#999" /></Svg></button>
            <button type="button" aria-label="Close"><Svg w={11} h={11}><path d="m.5.500 10 10M10.500.500l-10 10" stroke="#999" /></Svg></button>
          </CaptionButtons>
        </TitleBar>
        <MenuBar>
          <Svg w={4} h={14}><path d="M1 0v14" stroke="#27416f" strokeWidth="2" strokeDasharray="2 2" /></Svg>
          <ScreenIcon />
          <MenuList>
            {menus.map(m => <button key={m} type="button">{m}</button>)}
          </MenuList>
          <MdiButtons>
            <button type="button" aria-label="Minimize document"><Svg w={11} h={11}><path d="M3 9h6" stroke="#000" strokeWidth="2" /></Svg></button>
            <button type="button" aria-label="Restore document"><Svg w={11} h={11}><path d="M3.500 4V1.500h6v5H7M3 2h7" stroke="#000" /><path d="M1.500 4.500h5v5h-5zM1 5h6" stroke="#000" /></Svg></button>
            <button type="button" aria-label="Close document"><Svg w={11} h={11}><path d="m2 2 7 7M9 2 2 9" stroke="#000" strokeWidth="1.500" /></Svg></button>
          </MdiButtons>
        </MenuBar>
        <ToolbarRow>
          <Toolbar>
            <Grip />
            {toolGroups.map((group, i) => (
              <React.Fragment key={i}>
                {i > 0 && <ToolSeparator />}
                {group.map(([id, label]) => (
                  <ToolButton key={id} type="button" aria-label={label} $on={id === 'monitor'}>{icons[id]}</ToolButton>
                ))}
              </React.Fragment>
            ))}
            <OverflowCap type="button" aria-label="More tools"><CapMark /></OverflowCap>
          </Toolbar>
          <FormatToolbar />
        </ToolbarRow>
        <Workspace>
          <Resources />
          <Designer />
          <Properties />
        </Workspace>
        <StatusBar>
          <StatusText>Ready</StatusText>
          <StatusItem>Modified</StatusItem>
          <StatusItem>InterviewAPI_FirstTry</StatusItem>
          <StatusItem>DEU</StatusItem>
          <StatusItem $off>CAP</StatusItem>
          <StatusItem>NUM</StatusItem>
          <StatusItem $off>SCRL</StatusItem>
          <SizeGrip><Svg w={12} h={12}><path fill="#b4b4b4" d="M8 0h2v2H8zM4 4h2v2H4zM8 4h2v2H8zM0 8h2v2H0zM4 8h2v2H4zM8 8h2v2H8z" /></Svg></SizeGrip>
        </StatusBar>
        <OptionsDialog />
      </AppWindow>
    </>
  );
}
